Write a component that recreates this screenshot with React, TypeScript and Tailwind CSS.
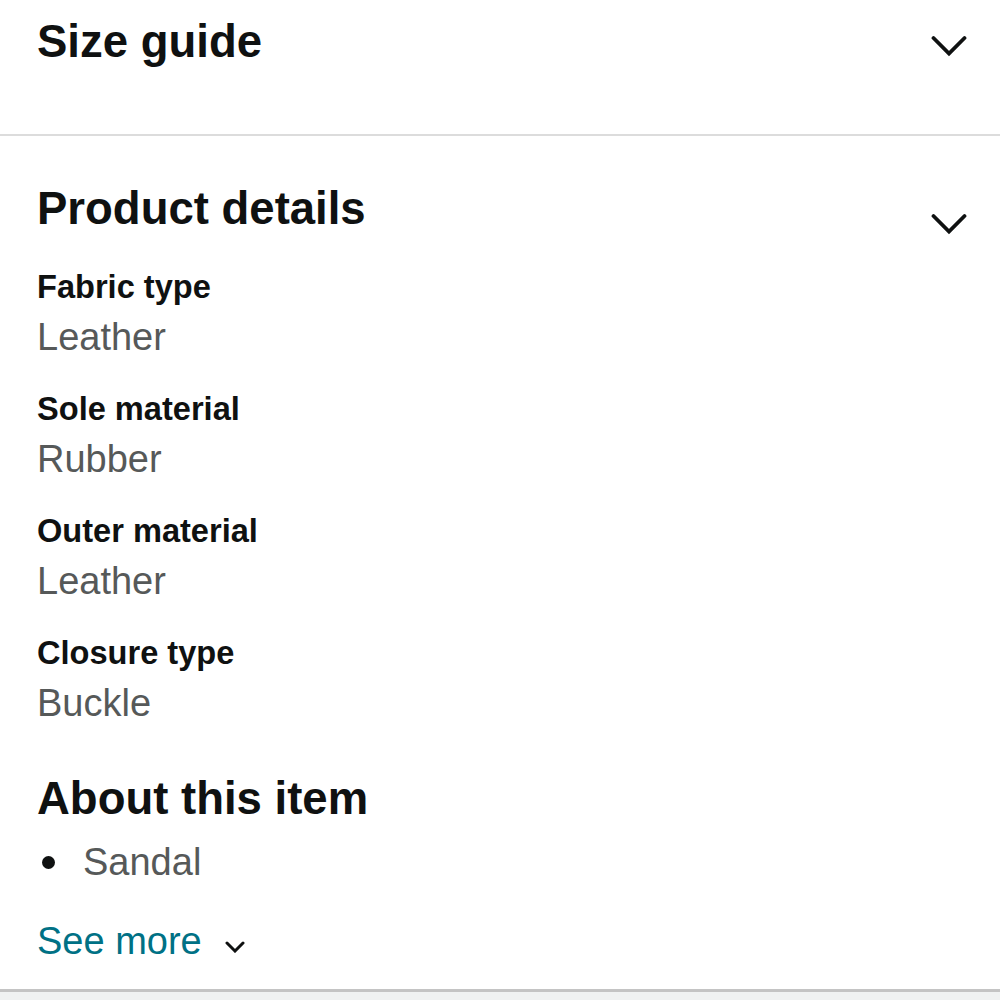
import React from "react";

const details = [
  { label: "Fabric type", value: "Leather" },
  { label: "Sole material", value: "Rubber" },
  { label: "Outer material", value: "Leather" },
  { label: "Closure type", value: "Buckle" },
];

function Chevron({ className = "" }: { className?: string }) {
  return (
    <svg viewBox="0 0 36 23" className={className} fill="none">
      <path d="M2.5 3 L18 18.5 L33.5 3" stroke="#0f1111" strokeWidth="3.8" strokeLinecap="round" strokeLinejoin="miter" />
    </svg>
  );
}

export default function App() {
  return (
    <div className="min-h-screen bg-white text-[#0f1111] font-['Liberation_Sans',Arial,sans-serif]">
      {/* Size guide */}
      <section className="h-[134px] pl-[37px] pr-[33px] pt-4 flex items-start justify-between">
        <h2 className="text-[45.5px] leading-[52px] font-bold">Size guide</h2>
        <Chevron className="w-[36px] h-[23px] mt-[19px]" />
      </section>
      <div className="h-[2px] bg-[#dcdcdc]" />

      {/* Product details */}
      <section className="pl-[37px] pr-[33px] pt-[47px]">
        <div className="flex items-start justify-between">
          <h2 className="text-[45.5px] leading-[52px] font-bold">Product details</h2>
          <Chevron className="w-[36px] h-[23px] mt-[30px]" />
        </div>
        <dl className="mt-[31px] flex flex-col gap-[30px]">
          {details.map((d) => (
            <div key={d.label}>
              <dt className="text-[32.6px] leading-[40px] font-bold">{d.label}</dt>
              <dd className="mt-2 text-[38px] leading-[44px] text-[#565959]">{d.value}</dd>
            </div>
          ))}
        </dl>

        {/* About this item */}
        <h2 className="mt-[48px] text-[45.5px] leading-[52px] font-bold">About this item</h2>
        <ul className="mt-[15px]">
          <li className="flex items-center">
            <span className="w-[13px] h-[13px] rounded-full bg-[#0f1111] ml-[5px] mr-[28px]" />
            <span className="text-[38px] leading-[44px] text-[#565959]">Sandal</span>
          </li>
        </ul>
        <button className="mt-[35px] flex items-center text-[38px] leading-[44px] text-[#007185]">
          See more
          <svg viewBox="0 0 20 12" className="w-[20px] h-[12px] ml-[23px] mt-[12px]" fill="none">
            <path d="M2 2 L10 10 L18 2" stroke="#0f1111" strokeWidth="3" strokeLinecap="round" />
          </svg>
        </button>
      </section>

      <div className="mt-[26px] h-[3px] bg-[#c4c4c4]" />
      <div className="h-[12px] bg-[#f0f2f2]" />
    </div>
  );
}
